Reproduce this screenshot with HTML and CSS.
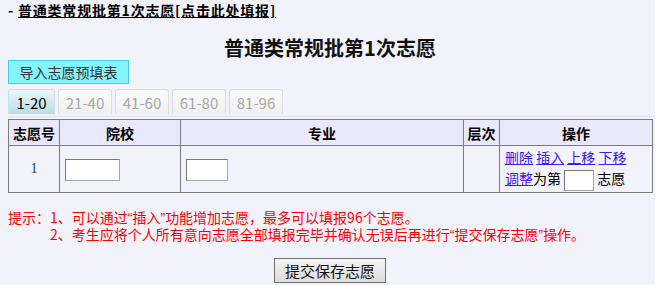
FILE: index.html
```html
<!DOCTYPE html>
<html lang="zh-CN">
<head>
<meta charset="utf-8">
<title>普通类常规批第1次志愿</title>
<link rel="stylesheet" href="styles.css">
</head>
<body>
<div class="page">
  <div class="toplink">- <a href="#">普通类常规批第1次志愿[点击此处填报]</a></div>
  <div class="title">普通类常规批第1次志愿</div>
  <button class="import" type="button">导入志愿预填表</button>
  <div class="tabs">
    <span class="tab active">1-20</span>
    <span class="tab">21-40</span>
    <span class="tab">41-60</span>
    <span class="tab">61-80</span>
    <span class="tab">81-96</span>
  </div>
  <table class="grid">
    <colgroup>
      <col class="c-no"><col class="c-school"><col class="c-major"><col class="c-level"><col class="c-op">
    </colgroup>
    <thead>
      <tr><th>志愿号</th><th>院校</th><th>专业</th><th>层次</th><th>操作</th></tr>
    </thead>
    <tbody>
      <tr>
        <td class="no">1</td>
        <td><input class="in-school" type="text"></td>
        <td><input class="in-major" type="text"></td>
        <td></td>
        <td class="op">
          <div class="op-line"><a href="#">删除</a> <a href="#">插入</a> <a href="#">上移</a> <a href="#">下移</a></div>
          <div class="op-line"><a href="#">调整</a>为第 <input class="in-pos" type="text"> 志愿</div>
        </td>
      </tr>
    </tbody>
  </table>
  <div class="notes">
    <div>提示：1、可以通过<span class="q">“</span>插入<span class="q">”</span>功能增加志愿，最多可以填报96个志愿。</div>
    <div class="indent">2、考生应将个人所有意向志愿全部填报完毕并确认无误后再进行<span class="q">“</span>提交保存志愿<span class="q">”</span>操作。</div>
  </div>
  <div class="submit-row"><button class="submit" type="button">提交保存志愿</button></div>
</div>
</body>
</html>
```
FILE: styles.css
```css
html, body {
  margin: 0;
  padding: 0;
  background: #ffffff;
}
body {
  font-family: "Noto Sans CJK SC", "Noto Sans", sans-serif;
  font-size: 14px;
  color: #000;
}
.page {
  width: 655px;
  height: 285px;
  box-sizing: border-box;
  padding: 0 3px 0 8px;
  background: #f2f2fb;
}
.toplink {
  height: 20px;
  line-height: 20px;
  font-size: 14px;
  font-weight: bold;
  letter-spacing: 0.8px;
}
.toplink a {
  color: #000;
  text-decoration: underline;
}
.title {
  margin-top: 16px;
  height: 24px;
  line-height: 24px;
  text-align: center;
  font-size: 20px;
  font-weight: bold;
  color: #111;
}
.import {
  display: block;
  width: 121px;
  height: 24px;
  margin: 0;
  padding: 0;
  background: #84f4fe;
  border: 1px solid #3fcbe6;
  font-family: inherit;
  font-size: 14px;
  color: #333;
  line-height: 20px;
}
.tabs {
  margin-top: 5px;
  height: 28px;
  display: flex;
  gap: 3px;
  border-bottom: 1px solid #e2e2e8;
  box-sizing: border-box;
}
.tab {
  height: 25px;
  width: 54px;
  box-sizing: border-box;
  border: 1px solid #dcdcdc;
  border-bottom: none;
  border-radius: 3px 3px 0 0;
  background: linear-gradient(#fbfbfb, #f0f0f0);
  color: #a8a8a8;
  text-align: center;
  line-height: 25px;
  font-size: 15px;
}
.tab.active {
  width: 47px;
  background: linear-gradient(#eaf6f9, #b7dce8);
  border-color: #c6e2ea;
  color: #000;
}
.grid {
  margin-top: 2px;
  width: 644px;
  border-collapse: collapse;
  table-layout: fixed;
}
.c-no { width: 51px; }
.c-school { width: 121px; }
.c-major { width: 283px; }
.c-level { width: 36px; }
.c-op { width: 153px; }
.grid th, .grid td {
  border: 1px solid #7c7c7c;
  padding: 0;
}
.grid th {
  height: 25px;
  background: #e9e9fb;
  font-weight: bold;
  font-size: 14px;
  text-align: center;
}
.grid td {
  height: 46px;
  vertical-align: middle;
}
.grid td.no {
  text-align: center;
  color: #1b3572;
  font-family: "Liberation Serif", serif;
  font-size: 14px;
}
.grid input {
  height: 22px;
  box-sizing: border-box;
  border: 1px solid #a6a6a6;
  border-top-color: #7a7a7a;
  border-left-color: #7a7a7a;
  background: #fff;
  padding: 0;
  margin: 0;
  vertical-align: middle;
}
.in-school { width: 55px; margin-left: 5px !important; }
.in-major { width: 42px; margin-left: 5px !important; }
.op {
  padding-left: 5px !important;
  font-size: 14px;
}
.op-line {
  line-height: 21px;
  white-space: nowrap;
}
.op a {
  color: #3a1cf0;
  text-decoration: underline;
}
.op .in-pos {
  width: 30px;
  height: 21px;
}
.notes {
  margin-top: 16px;
  color: #ff0000;
  font-size: 14px;
  line-height: 16px;
}
.notes .q {
  font-family: "Liberation Sans", sans-serif;
}
.notes .indent {
  padding-left: 42px;
}
.submit-row {
  margin-top: 15px;
  text-align: center;
}
.submit {
  width: 112px;
  height: 25px;
  margin: 0;
  padding: 0;
  border: 1px solid #707070;
  background: linear-gradient(#f4f4f4, #dcdcdc);
  font-family: inherit;
  font-size: 15px;
  color: #111;
  line-height: 21px;
}
```
